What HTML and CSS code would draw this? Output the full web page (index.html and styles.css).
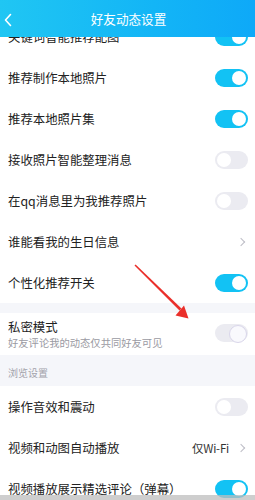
FILE: index.html
```html
<!DOCTYPE html>
<html lang="zh-CN">
<head>
<meta charset="utf-8">
<title>好友动态设置</title>
<link rel="stylesheet" href="styles.css">
</head>
<body>
<div class="page">
  <div class="scroll">
    <div class="row"><span class="label">关键词智能推荐配图</span><span class="toggle on"></span></div>
    <div class="row"><span class="label">推荐制作本地照片</span><span class="toggle on"></span></div>
    <div class="row"><span class="label">推荐本地照片集</span><span class="toggle on"></span></div>
    <div class="row"><span class="label">接收照片智能整理消息</span><span class="toggle"></span></div>
    <div class="row"><span class="label">在qq消息里为我推荐照片</span><span class="toggle"></span></div>
    <div class="row"><span class="label">谁能看我的生日信息</span><span class="chev"></span></div>
    <div class="row"><span class="label">个性化推荐开关</span><span class="toggle on"></span></div>
    <div class="gap"></div>
    <div class="row tall">
      <div class="texts">
        <span class="label">私密模式</span>
        <span class="sub">好友评论我的动态仅共同好友可见</span>
      </div>
      <span class="toggle mid"></span>
    </div>
    <div class="section">浏览设置</div>
    <div class="row"><span class="label">操作音效和震动</span><span class="toggle"></span></div>
    <div class="row"><span class="label">视频和动图自动播放</span><span class="right"><span class="value">仅Wi-Fi</span><span class="chev"></span></span></div>
    <div class="row"><span class="label">视频播放展示精选评论（弹幕）</span><span class="toggle on"></span></div>
  </div>

  <div class="header">
    <svg class="back" width="10" height="14" viewBox="0 0 10 14"><path d="M7.5 1.5 L2.5 7 L7.5 12.5" fill="none" stroke="#fff" stroke-width="1.6" stroke-linecap="round" stroke-linejoin="round"/></svg>
    <span class="title">好友动态设置</span>
  </div>

  <svg class="arrow" width="255" height="500" viewBox="0 0 255 500">
    <polygon points="134.5,265.5 135.6,264.6 181.5,308.5 179.5,310.5" fill="#ea2f2a"/>
    <polygon points="188.5,318.5 175.5,315.5 184,305.5" fill="#ea2f2a"/>
  </svg>

  <div class="navbar"></div>
</div>
</body>
</html>
```
FILE: styles.css
```css
* { box-sizing: border-box; }
html, body { margin: 0; padding: 0; }
body {
  font-family: "Noto Sans CJK SC", "Noto Sans", sans-serif;
  background: #fff;
  color: #222;
}
.page {
  position: relative;
  width: 255px;
  height: 500px;
  overflow: hidden;
  background: #fff;
}
.scroll {
  padding-top: 16px;
}
.row {
  height: 41px;
  display: flex;
  align-items: center;
  justify-content: space-between;
  padding: 0 7px 0 8px;
  background: #fff;
}
.row.tall {
  height: 42px;
  align-items: flex-start;
}
.label {
  font-size: 12.4px;
  line-height: 16px;
  color: #222;
  white-space: nowrap;
}
.texts {
  display: flex;
  flex-direction: column;
  padding-top: 6px;
}
.sub {
  font-size: 10.3px;
  line-height: 13px;
  color: #9a9aa2;
  margin-top: 1px;
  white-space: nowrap;
}
.row.tall .toggle { margin-top: 11px; }
.gap {
  height: 10px;
  background: #f5f6fa;
}
.section {
  height: 31px;
  background: #f5f6fa;
  padding: 11px 8px 0;
  font-size: 10px;
  line-height: 14px;
  color: #a3a3ab;
}
.toggle {
  position: relative;
  width: 33px;
  height: 18px;
  border-radius: 9px;
  background: #ebebf1;
  flex: none;
}
.toggle::after {
  content: "";
  position: absolute;
  top: 2px;
  left: 2px;
  width: 14px;
  height: 14px;
  border-radius: 50%;
  background: #fff;
}
.toggle.on { background: #12c2f4; }
.toggle.on::after { left: 17px; }
.toggle.mid { background: #ebebf1; }
.toggle.mid::after {
  left: 14px;
  top: 1px;
  width: 16px;
  height: 16px;
  border: 1px solid #d9d6ea;
  background: #f9f9fd;
}
.right {
  display: flex;
  align-items: center;
  gap: 9px;
}
.value {
  font-size: 11.5px;
  line-height: 16px;
  color: #333;
  letter-spacing: -0.2px;
}
.chev {
  width: 6px;
  height: 6px;
  border-top: 1.3px solid #bdbdc6;
  border-right: 1.3px solid #bdbdc6;
  transform: rotate(45deg);
  margin-right: 4px;
  flex: none;
}
.header {
  position: absolute;
  top: 0;
  left: 0;
  width: 255px;
  height: 37px;
  background: linear-gradient(90deg, #20c6f3 0%, #13b5f6 60%, #0ea9f8 100%);
  display: flex;
  align-items: center;
  justify-content: center;
}
.back {
  position: absolute;
  left: 3px;
  top: 13px;
}
.title {
  font-size: 12.6px;
  line-height: 16px;
  color: #fff;
  margin-left: 2px;
}
.arrow {
  position: absolute;
  top: 0;
  left: 0;
  pointer-events: none;
}
.navbar {
  position: absolute;
  left: 0;
  bottom: 0;
  width: 255px;
  height: 5px;
  background: rgba(190, 190, 190, 0.75);
}
```
